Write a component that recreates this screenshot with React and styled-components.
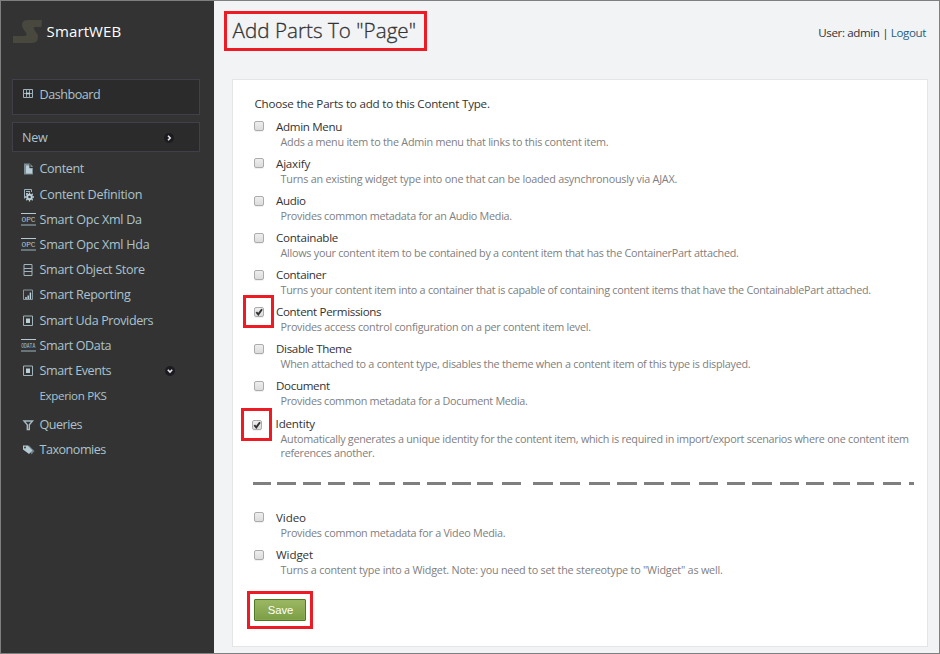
import React from "react";
import styled, { createGlobalStyle } from "styled-components";

const Global = createGlobalStyle`
  * { box-sizing: border-box; }
  body {
    margin: 0;
    background: #f2f3f5;
    font-family: "Open Sans", "Noto Sans", sans-serif;
    color: #333;
  }
`;

const Frame = styled.div`
  display: flex;
  width: 940px;
  height: 654px;
  border: 1px solid #7f7f7f;
  background: #f2f3f5;
  overflow: hidden;
`;

/* ---------- sidebar ---------- */

const Sidebar = styled.nav`
  flex: 0 0 213px;
  padding: 18px 14px 0 11px;
  background: #333;
  color: #aac3cf;
  font-size: 12.6px;
`;

const Brand = styled.div`
  display: flex;
  align-items: flex-start;
  height: 60px;
  gap: 4.6px;
  color: #fff;
  font-size: 15px;
  line-height: 25px;
  letter-spacing: 0.12px;
`;

const LogoMark = styled.svg`
  width: 30px;
  height: 25px;
`;

const NavBox = styled.div`
  display: flex;
  align-items: flex-start;
  height: ${(p) => p.$height}px;
  margin-bottom: 7px;
  padding: ${(p) => p.$pad};
  border: 1px solid #40404a;
  background: #2b2b2b;
`;

const NavList = styled.ul`
  list-style: none;
  margin: -2.2px 0 0;
  padding: 0 0 0 9px;
`;

const NavRow = styled.li`
  display: flex;
  align-items: center;
  height: 25.2px;
  margin-top: ${(p) => p.$top || 0}px;
`;

const IconSlot = styled.span`
  flex: 0 0 15px;
  height: 14px;
  margin-right: 3.5px;
`;

const NavIcon = styled.svg`
  display: block;
  width: 15px;
  height: 14px;
  overflow: visible;
  fill: none;
  stroke: #9fb4bd;
`;

const NavText = styled.a`
  flex: 1;
  line-height: 18px;
  font-size: ${(p) => p.$size || 12.6}px;
  letter-spacing: ${(p) => p.$track ?? -0.28}px;
  white-space: nowrap;
`;

const Toggle = styled.svg`
  width: 10px;
  height: 10px;
  margin: ${(p) => p.$top || 0}px 25px 0 0;
`;

/* ---------- content ---------- */

const Main = styled.main`
  flex: 1;
  min-width: 0;
  display: flex;
  flex-direction: column;
  padding: 10px 11px 6px 10px;
`;

const Header = styled.header`
  display: flex;
  justify-content: space-between;
  align-items: flex-start;
  height: 68px;
`;

const Title = styled.h1`
  width: 203px;
  height: 40px;
  margin: 0;
  padding-left: 5.5px;
  border: 3px solid #ed1c24;
  font-size: 20.6px;
  font-weight: 300;
  line-height: 33px;
  letter-spacing: 0.04px;
  white-space: nowrap;
  -webkit-text-stroke: 0.3px #333;
`;

const UserInfo = styled.div`
  padding: 13px 2px 0 0;
  font-size: 11.6px;
  line-height: 18px;
  letter-spacing: -0.39px;
`;

const Logout = styled.a`
  color: #1f5f80;
`;

const Panel = styled.section`
  flex: 1;
  margin-left: 8px;
  padding: 15px 0 0 20px;
  border: 1px solid #e4e5e6;
  background: #fff;
`;

const Intro = styled.p`
  margin: 0 0 7px 1.5px;
  font-size: 11.6px;
  line-height: 17px;
  letter-spacing: -0.21px;
`;

const Part = styled.div`
  position: relative;
  display: grid;
  grid-template-columns: 22px 1fr;
  grid-template-rows: 16px auto;
  margin-bottom: ${(p) => p.$after ?? 7}px;
`;

const Check = styled.span`
  width: 10px;
  height: 10px;
  margin: ${(p) => p.$top ?? 3}px 0 0 ${(p) => (p.$shift ? -1 : 1)}px;
  border: 1px solid #acacac;
  border-radius: 2px;
  background: linear-gradient(#eeeeee, #dcdcdc);
  box-shadow: 0 1px 0 #f0f0f0;

  svg {
    display: block;
    width: 8px;
    height: 8px;
    overflow: visible;
  }
`;

const Highlight = styled.span`
  position: absolute;
  left: ${(p) => p.$x}px;
  top: ${(p) => p.$y}px;
  width: 31px;
  height: 33px;
  border: 3px solid #ed1c24;
`;

const PartName = styled.label`
  padding-left: ${(p) => (p.$shift ? 0.6 : 1)}px;
  font-size: 11.6px;
  line-height: 16px;
  letter-spacing: ${(p) => p.$track ?? -0.34}px;
`;

const PartHint = styled.div`
  grid-column: 2;
  padding-left: 5.5px;
  color: #808080;
  font-size: 10.8px;
  line-height: 14px;
  letter-spacing: ${(p) => p.$track ?? -0.262}px;
  white-space: nowrap;
`;

const Dashes = styled.div`
  display: flex;
  height: 3px;
  margin: 22px 0 25px;
`;

const Dash = styled.span`
  flex: none;
  width: ${(p) => p.$w}px;
  margin-right: ${(p) => p.$gap}px;
  background: #7f7f7f;
`;

const SaveFrame = styled.div`
  display: flex;
  width: 66px;
  height: 38px;
  margin: 0 0 0 -6px;
  padding: 5px 4px;
  border: 3px solid #ed1c24;
`;

const SaveButton = styled.button`
  width: 52px;
  height: 22px;
  padding: 1px 0 0 1px;
  border: 1px solid #4c7a21;
  border-radius: 1px;
  background: linear-gradient(#9cb763, #7c9e45);
  box-shadow: inset 0 0 0 1px rgba(150, 180, 90, 0.4);
  color: #fff;
  font: 11.3px/19px "Liberation Sans", sans-serif;
`;

/* ---------- icons ---------- */

const icons = {
  grid: (
    <g>
      <path d="M2.500 3.500h9v8h-9z" />
      <path d="M5.500 3.500v8M8.500 3.500v8M2.500 7.500h3M8.500 7.500h3" stroke="#8ea2ab" />
      <path d="M5 7.500h4" strokeWidth="1.600" stroke="#c3d9e2" />
    </g>
  ),
  page: (
    <g stroke="none">
      <path fill="#7d8d94" d="M3 1.500h6l3 3v8H3z" />
      <path fill="#b9ced7" d="M5 3.500h3.500v3H11v5H5z" />
      <path fill="#333" d="M8.500 2h1v3H12v1H8.500z" />
    </g>
  ),
  gear: (
    <g>
      <path d="M3.500 10.500V1.500h7V4M5 3.500h4M5 5.500h2" />
      <circle cx="8.500" cy="9" r="2.300" strokeWidth="2" stroke="#b9ced7" />
      <path d="M8.500 4.500v1.500M8.500 12v1.500M4 9h1.500M11.500 9H13M5.300 5.800l1 1M10.700 11.200l1 1M11.700 5.800l-1 1M6.300 11.200l-1 1" strokeWidth="1.300" stroke="#b9ced7" />
    </g>
  ),
  list: <path d="M3 1.500h8v11H3zM3 5.500h8M3 8.500h8" />,
  chart: (
    <g>
      <path d="M2.500 2h9v9.500h-9z" stroke="#87989f" />
      <path d="M5 11V9M7.200 11V7.500M9.400 11V4.500" stroke="#c3d9e2" strokeWidth="1.400" />
    </g>
  ),
  square: (
    <g>
      <path d="M2.500 2h9v9.500h-9z" />
      <path d="M5 4.500h4v4.500H5z" fill="#b9ced7" stroke="none" />
    </g>
  ),
  funnel: (
    <path d="M3 3h8.500L8.300 6.700V11.500H6.300V6.700z" stroke="#a5bac4" strokeWidth="1.400" />
  ),
  tags: (
    <g stroke="none">
      <path fill="#6f7f86" d="M6 2.500l2 0 5.500 5.500-3 3.500z" />
      <path fill="#b4c9d2" d="M2 2.500h4.500l5 5-3.500 3.500L2 6.500z" />
      <circle cx="4" cy="4.500" r="0.900" fill="#333" />
    </g>
  ),
};

const BadgeText = styled.text`
  fill: #b0c4cd;
  stroke: none;
  font-family: "Liberation Mono", monospace;
  font-size: 8px;
`;

const badges = {
  opc: { label: "OPC", squeeze: "scale(0.98 1)" },
  odata: { label: "ODATA", squeeze: "scale(0.58 1)" },
};

function Icon({ name }) {
  const badge = badges[name];
  if (badge) {
    return (
      <NavIcon viewBox="0 0 15 14">
        <path d="M0 0.500h15" stroke="#b4c9d2" />
        <path d="M0 12h15" stroke="#75868d" strokeWidth="1.600" />
        <BadgeText x="0.500" y="9" transform={badge.squeeze}>{badge.label}</BadgeText>
      </NavIcon>
    );
  }
  return <NavIcon viewBox="0 0 15 14">{icons[name]}</NavIcon>;
}

function Chevron({ down, top }) {
  return (
    <Toggle viewBox="0 0 10 10" $top={top}>
      <circle cx="5" cy="5" r="5" fill="#1c1c20" />
      <path
        d={down ? "M2.800 3.800L5 6l2.200-2.200" : "M4 2.800L6.200 5 4 7.200"}
        fill="none"
        stroke="#e8e8ec"
        strokeWidth="1.600"
      />
    </Toggle>
  );
}

/* ---------- data ---------- */

const nav = [
  { icon: "page", text: "Content", track: -0.36 },
  { icon: "gear", text: "Content Definition" },
  { icon: "opc", text: "Smart Opc Xml Da" },
  { icon: "opc", text: "Smart Opc Xml Hda" },
  { icon: "list", text: "Smart Object Store", track: -0.33 },
  { icon: "chart", text: "Smart Reporting", track: -0.33 },
  { icon: "square", text: "Smart Uda Providers", track: -0.4 },
  { icon: "odata", text: "Smart OData", track: -0.38 },
  { icon: "square", text: "Smart Events", track: -0.46, open: true },
  { text: "Experion PKS", size: 11.6, track: -0.36 },
  { icon: "funnel", text: "Queries", track: -0.5, top: 3.5 },
  { icon: "tags", text: "Taxonomies", track: -0.5 },
];

const parts = [
  { name: "Admin Menu", hint: "Adds a menu item to the Admin menu that links to this content item.", checkTop: 2, hintTrack: -0.25 },
  { name: "Ajaxify", hint: "Turns an existing widget type into one that can be loaded asynchronously via AJAX.", checkTop: 2, hintTrack: -0.22, nameTrack: -0.2 },
  { name: "Audio", hint: "Provides common metadata for an Audio Media.", hintTrack: -0.28 },
  { name: "Containable", hint: "Allows your content item to be contained by a content item that has the ContainerPart attached.", nameTrack: -0.26 },
  { name: "Container", hint: "Turns your content item into a container that is capable of containing content items that have the ContainablePart attached." },
  { name: "Content Permissions", hint: "Provides access control configuration on a per content item level.", checked: true, frame: [-10, -9] },
  { name: "Disable Theme", hint: "When attached to a content type, disables the theme when a content item of this type is displayed.", hintTrack: -0.255 },
  { name: "Document", hint: "Provides common metadata for a Document Media.", after: 8, hintTrack: -0.29 },
  {
    name: "Identity",
    hint: (
      <>
        Automatically generates a unique identity for the content item, which is required in import/export scenarios where one content item
        <br />
        references another.
      </>
    ),
    checked: true,
    frame: [-12, -8],
    checkTop: 4,
    shift: true,
    after: 0,
    hintTrack: -0.275,
    nameTrack: -0.2,
  },
];

const moreParts = [
  { name: "Video", hint: "Provides common metadata for a Video Media.", checkTop: 2, nameTrack: -0.1 },
  { name: "Widget", hint: 'Turns a content type into a Widget. Note: you need to set the stereotype to "Widget" as well.', after: 14, hintTrack: -0.21, nameTrack: -0.1 },
];

/* [length, gap after] of each stroke in the hand-drawn break line */
const dashes = [
  [18, 6], [19, 7], [18, 7], [17, 8], [17, 9], [16, 8], [17, 7], [19, 6], [19, 6], [16, 9],
  [19, 12], [20, 7], [20, 9], [21, 7], [20, 7], [20, 7], [19, 9], [19, 9], [18, 7], [20, 8],
  [19, 7], [18, 9], [17, 7], [17, 9], [18, 8], [5, 0],
];

function PartRow({ name, hint, checked, frame, shift, after, checkTop, hintTrack, nameTrack }) {
  return (
    <Part $after={after}>
      <Check $shift={shift} $top={checkTop}>
        {checked && (
          <svg viewBox="0 0 8 8">
            <path d="M1.300 4.200l2 2.200L7 1.200" fill="none" stroke="#333" strokeWidth="1.900" />
          </svg>
        )}
      </Check>
      <PartName $shift={shift} $track={nameTrack}>{name}</PartName>
      <PartHint $track={hintTrack}>{hint}</PartHint>
      {frame && <Highlight $x={frame[0]} $y={frame[1]} />}
    </Part>
  );
}

export default function App() {
  return (
    <>
      <Global />
      <Frame>
        <Sidebar>
          <Brand>
            <LogoMark viewBox="0 0 30 25">
              <path
                fill="#48483e"
                d="M30 1H15.500Q10 1 10 6q0 2.500 2 5l2.500 3.500Q15 17 12.500 17H1v7h18.500q6.500 0 6.500-6 0-2.500-2-5l-2-3Q21 8 23 8h6.500z"
              />
            </LogoMark>
            SmartWEB
          </Brand>
          <NavBox $height={36} $pad="6px 0 0 8px">
            <IconSlot><Icon name="grid" /></IconSlot>
            <NavText $track={-0.48}>Dashboard</NavText>
          </NavBox>
          <NavBox $height={30} $pad="6px 0 0 9px">
            <NavText>New</NavText>
            <Chevron top={4} />
          </NavBox>
          <NavList>
            {nav.map((n) => (
              <NavRow key={n.text} $top={n.top}>
                <IconSlot>{n.icon && <Icon name={n.icon} />}</IconSlot>
                <NavText $size={n.size} $track={n.track}>{n.text}</NavText>
                {n.open && <Chevron down />}
              </NavRow>
            ))}
          </NavList>
        </Sidebar>
        <Main>
          <Header>
            <Title>Add Parts To "Page"</Title>
            <UserInfo>
              User: admin | <Logout>Logout</Logout>
            </UserInfo>
          </Header>
          <Panel>
            <Intro>Choose the Parts to add to this Content Type.</Intro>
            {parts.map((p) => <PartRow key={p.name} {...p} />)}
            <Dashes>
              {dashes.map(([w, gap], i) => <Dash key={i} $w={w} $gap={gap} />)}
            </Dashes>
            {moreParts.map((p) => <PartRow key={p.name} {...p} />)}
            <SaveFrame>
              <SaveButton>Save</SaveButton>
            </SaveFrame>
          </Panel>
        </Main>
      </Frame>
    </>
  );
}
